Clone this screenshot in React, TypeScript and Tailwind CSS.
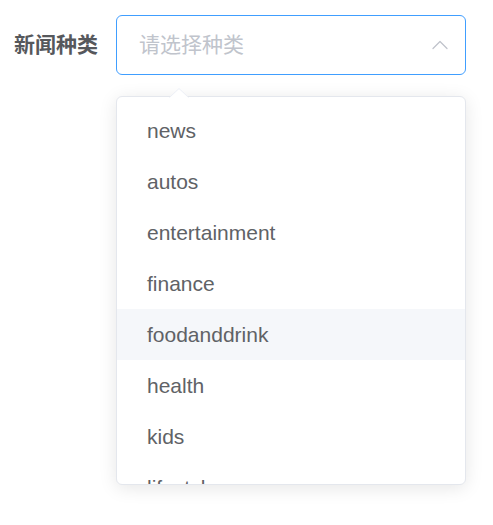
import { ChevronUp } from 'lucide-react';

const OPTIONS = ['news', 'autos', 'entertainment', 'finance', 'foodanddrink', 'health', 'kids', 'lifestyle'];

export default function App() {
    return (
        <div
            className="min-h-screen bg-white pl-[14px] pt-[15px]"
            style={{ fontFamily: '"Liberation Sans", Arial, "Noto Sans CJK SC", sans-serif' }}
        >
            <div className="flex items-start">
                {/* Label */}
                <label className="w-[102px] pr-[18px] h-[60px] flex items-center text-[21px] font-bold text-[#56585c]">
                    新闻种类
                </label>

                {/* Select */}
                <div className="relative w-[350px]">
                    <div className="h-[60px] rounded-[6px] border border-[#409EFF] flex items-center pl-[22px] pr-[11px]">
                        <span className="flex-1 text-[21px] text-[#C0C4CC]">请选择种类</span>
                        <ChevronUp size={28} strokeWidth={1.1} className="text-[#C0C4CC]" />
                    </div>

                    {/* Dropdown */}
                    <div className="absolute left-0 top-[81px] w-[350px] h-[389px] rounded-[6px] border border-[#E4E7ED] bg-white shadow-[0_3px_18px_0_rgba(0,0,0,0.1)]">
                        <svg
                            className="absolute top-[-9px] left-[52px]"
                            width="20"
                            height="10"
                            viewBox="0 0 20 10"
                        >
                            <path d="M0 10 L10 0 L20 10 Z" fill="#fff" />
                            <path d="M0.5 9.5 L10 0.5 L19.5 9.5" fill="none" stroke="#EBEEF5" strokeWidth="1" />
                        </svg>
                        <div className="h-full overflow-hidden rounded-[6px]">
                            <ul className="pt-[8px]">
                                {OPTIONS.map((opt) => (
                                    <li
                                        key={opt}
                                        className={
                                            'h-[51px] flex items-center px-[30px] text-[21px] text-[#606266] ' +
                                            (opt === 'foodanddrink' ? 'bg-[#F5F7FA]' : '')
                                        }
                                    >
                                        {opt}
                                    </li>
                                ))}
                            </ul>
                        </div>
                    </div>
                </div>
            </div>
        </div>
    );
}
